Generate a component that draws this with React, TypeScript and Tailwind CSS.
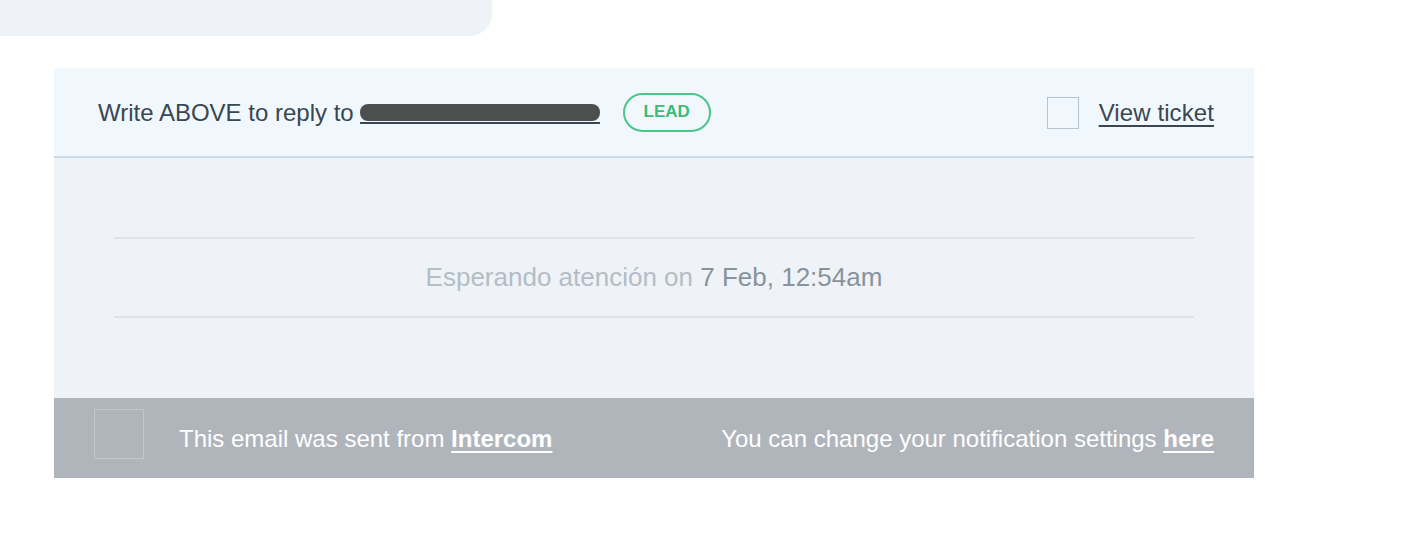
export default function App() {
  return (
    <div
      className="w-[1406px] h-[546px] bg-white relative"
      style={{ fontFamily: '"Liberation Sans", Arial, sans-serif' }}
    >
      <div className="w-[492px] h-[36px] bg-[#eff3f7] rounded-br-[22px]" />

      <div className="ml-[54px] mt-[32px] w-[1200px]">
        <header className="h-[90px] bg-[#f0f8fe] border-b-2 border-[#c9dde6] flex items-center justify-between pl-[44px] pr-[40px] pt-[2px]">
          <div className="flex items-center text-[24px] text-[#3a4750]">
            <span>Write ABOVE to reply to</span>
            <span className="ml-[6px] inline-flex flex-col w-[240px]">
              <span className="h-[17px] mt-[2px] rounded-[8px] bg-[#3b3b3b] opacity-90" />
              <span className="h-[2px] mt-[1px] bg-[#3a4750]" />
            </span>
            <span className="ml-[23px] -mt-[2px] h-[39px] w-[88px] rounded-full border-2 border-[#4ec48b] text-[#3dbb7a] text-[17px] font-bold flex items-center justify-center">
              LEAD
            </span>
          </div>
          <div className="flex items-center">
            <span className="w-[32px] h-[32px] border border-[#b8c4cc]" />
            <a className="ml-[20px] text-[24px] text-[#3a4750] underline underline-offset-[4px] decoration-2 tracking-[0.1px]">
              View ticket
            </a>
          </div>
        </header>

        <section className="bg-[#eff3f7] h-[240px] px-[60px] pt-[79px]">
          <div className="h-[2px] bg-[#dde3e8]" />
          <div className="h-[77px] flex items-center justify-center text-[26px]">
            <span className="text-[#b3bdc6]">Esperando atención on&nbsp;</span>
            <span className="text-[#87939c]">7 Feb, 12:54am</span>
          </div>
          <div className="h-[2px] bg-[#dde3e8]" />
        </section>

        <footer className="h-[80px] bg-[#b0b5bc] flex items-center justify-between pl-[40px] pr-[40px] text-white text-[24px]">
          <div className="flex items-center">
            <span className="w-[50px] h-[50px] border border-[#c4c8cd] -mt-[8px]" />
            <span className="ml-[35px] mt-[2px]">
              This email was sent from{" "}
              <a className="font-bold underline underline-offset-[4px] decoration-2">Intercom</a>
            </span>
          </div>
          <span className="mt-[2px]">
            You can change your notification settings{" "}
            <a className="font-bold underline underline-offset-[4px] decoration-2">here</a>
          </span>
        </footer>
      </div>
    </div>
  );
}
